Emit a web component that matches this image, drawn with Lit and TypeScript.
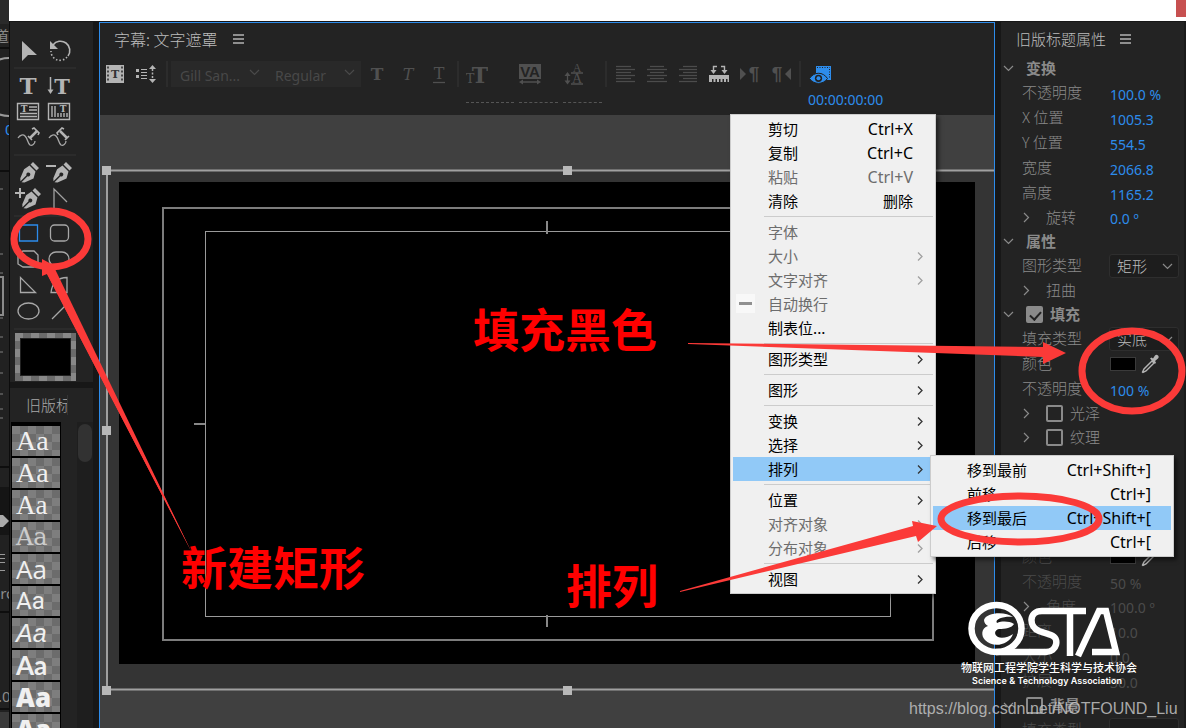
import { LitElement, html, svg, css, nothing } from "lit";
import { customElement } from "lit/decorators.js";
import { classMap } from "lit/directives/class-map.js";

type Item = { text: string; key?: string; off?: boolean; sub?: boolean; on?: boolean; dash?: boolean } | null;

const MENU: Item[] = [
  { text: "剪切", key: "Ctrl+X" },
  { text: "复制", key: "Ctrl+C" },
  { text: "粘贴", key: "Ctrl+V", off: true },
  { text: "清除", key: "删除" },
  null,
  { text: "字体", off: true },
  { text: "大小", off: true, sub: true },
  { text: "文字对齐", off: true, sub: true },
  { text: "自动换行", off: true, dash: true },
  { text: "制表位..." },
  null,
  { text: "图形类型", sub: true },
  null,
  { text: "图形", sub: true },
  null,
  { text: "变换", sub: true },
  { text: "选择", sub: true },
  { text: "排列", sub: true, on: true },
  null,
  { text: "位置", sub: true },
  { text: "对齐对象", off: true, sub: true },
  { text: "分布对象", off: true, sub: true },
  null,
  { text: "视图", sub: true },
];

const SUBMENU: Item[] = [
  { text: "移到最前", key: "Ctrl+Shift+]" },
  { text: "前移", key: "Ctrl+]" },
  { text: "移到最后", key: "Ctrl+Shift+[", on: true },
  { text: "后移", key: "Ctrl+[" },
];

const nib = svg`<path fill="#b4b4b4" d="M19 3l6 6-2.500 2.500-6-6zM15.500 6.500l6 6-2 7-9 4-3-.2 6-6a2 2 0 1 0-1-1l-6 6-.2-3 3.800-9z"/>`;
const curveT = svg`<path fill="none" stroke="#a8a8a8" stroke-width="1.300" d="M4 14c2-3 5-4 7-2 3 3 2 6 5 9 2 1 5-1 5-4"/>`;

/* Tool palette drawings, each on a 30 x 26 field; null is a divider. */
const TOOLS: ({ name: string; art: unknown } | null)[] = [
  { name: "选择", art: svg`<path fill="#b4b4b4" d="M8 4v20l6-6h9z"/>` },
  { name: "旋转", art: svg`<path fill="none" stroke="#b4b4b4" stroke-width="1.600" d="M8 8a9 9 0 0 1 15 11"/><path fill="none" stroke="#b4b4b4" stroke-width="1.600" stroke-dasharray="1.500 2" d="M22 20a9 9 0 0 1-16-6"/><path fill="#b4b4b4" d="M5 4v8h8z"/>` },
  null,
  { name: "文字", art: svg`<text x="14" y="22" class="slab" font-size="23" text-anchor="middle">T</text>` },
  { name: "垂直文字", art: svg`<text x="17" y="22" class="slab" font-size="21" text-anchor="middle">T</text><path fill="none" stroke="#b4b4b4" stroke-width="1.500" d="M5.500 5v14"/><path fill="#b4b4b4" d="M2.500 17.500h6l-3 4.500z"/>` },
  { name: "区域文字", art: svg`<path fill="none" stroke="#b4b4b4" stroke-width="1.400" d="M3.500 5.500h21v16h-21zM15 9h8M15 12h8M6 15.500h17M6 18.500h17"/><text x="10" y="14" class="slab" font-size="9" text-anchor="middle">T</text>` },
  { name: "垂直区域文字", art: svg`<path fill="none" stroke="#b4b4b4" stroke-width="1.400" d="M3.500 5.500h21v16h-21zM7 8v11M10 8v11M13 15v4M16 15v4M19 15v4M22 15v4"/><text x="18" y="14" class="slab" font-size="9" text-anchor="middle">T</text>` },
  { name: "路径文字", art: svg`${curveT}<path stroke="#b4b4b4" stroke-width="2.500" fill="none" d="M16 14l7-7"/><path stroke="#b4b4b4" stroke-width="1.600" fill="none" d="M18 5l2-1 5 5-1 2M14 12l4 4"/>` },
  { name: "垂直路径文字", art: svg`${curveT}<path stroke="#b4b4b4" stroke-width="2.500" fill="none" d="M15 7l7 7"/><path stroke="#b4b4b4" stroke-width="1.600" fill="none" d="M13 11l-1-2 5-5 2 1M20 16l4-4"/>` },
  null,
  { name: "钢笔", art: nib },
  { name: "删除锚点", art: svg`<g transform="translate(2 0)">${nib}</g><path fill="#b4b4b4" d="M1 6h10v2H1z"/>` },
  { name: "添加锚点", art: svg`<g transform="translate(2 0)">${nib}</g><path fill="#b4b4b4" d="M1 7h10v2H1zM5 3h2v10H5z"/>` },
  { name: "转换锚点", art: svg`<path fill="none" stroke="#a0a0a0" stroke-width="1.300" d="M9 23V4l13 13"/>` },
  null,
  { name: "矩形", art: svg`<path fill="none" stroke="#2d8ceb" stroke-width="1.300" d="M5.500 5h18v16h-18z"/>` },
  { name: "圆角矩形", art: svg`<rect fill="none" stroke="#a8a8a8" stroke-width="1.300" x="5.500" y="5" width="18" height="16" rx="4"/>` },
  { name: "切角矩形", art: svg`<path fill="none" stroke="#a8a8a8" stroke-width="1.300" d="M9 5h11l4 4v9l-4 3H9l-5-3V9z"/>` },
  { name: "圆矩形", art: svg`<rect fill="none" stroke="#a8a8a8" stroke-width="1.300" x="4" y="6" width="20" height="14" rx="7"/>` },
  { name: "楔形", art: svg`<path fill="none" stroke="#a8a8a8" stroke-width="1.300" d="M6.500 5.500v15h15z"/>` },
  { name: "弧形", art: svg`<path fill="none" stroke="#a8a8a8" stroke-width="1.300" d="M6 20.500C7 11 13 5.500 22 5.500v15z"/>` },
  { name: "椭圆", art: svg`<ellipse fill="none" stroke="#a8a8a8" stroke-width="1.300" cx="14.500" cy="13" rx="10.500" ry="8"/>` },
  { name: "直线", art: svg`<path stroke="#a8a8a8" stroke-width="1.300" d="M7 21L23 5"/>` },
  null,
];

const STYLES = ["s1", "s1", "s1 tight", "s2", "s3", "s4", "s5", "s6", "s7", "s7"];

const glyph = (w: number, h: number, art: unknown) =>
  html`<svg width=${w} height=${h} viewBox="0 0 ${w} ${h}" aria-hidden="true">${art}</svg>`;

const down = (c = "#8a8a8a") => glyph(11, 7, svg`<path fill="none" stroke=${c} stroke-width="1.200" d="M1 1l4.500 4.500L10 1"/>`);
const right = (c = "#8a8a8a") => glyph(7, 11, svg`<path fill="none" stroke=${c} stroke-width="1.200" d="M1 1l4.500 4.500L1 10"/>`);
const burger = glyph(11, 10, svg`<path stroke="#b4b4b4" stroke-width="1.300" d="M0 1h11M0 5h11M0 9h11"/>`);

@customElement("app-root")
export class AppRoot extends LitElement {
  static styles = css`
    :host {
      display: block;
      font-family: "Noto Sans", "Noto Sans CJK SC", sans-serif;
      font-size: 15px;
      line-height: 20px;
    }
    * { box-sizing: border-box; }
    svg { display: block; flex: none; }
    button, input, select { font: inherit; color: inherit; background: none; border: 0; padding: 0; margin: 0; }
    .app { position: relative; display: flex; height: 100vh; overflow: hidden; background: #171717; color: #8a8a8a; }
    .cjk { font-family: "Noto Sans CJK SC", sans-serif; font-weight: 300; }
    .behind { width: 9px; flex: none; background: #212121; overflow: hidden; }
    .window { flex: 1; min-width: 0; display: flex; flex-direction: column; border-left: 1px solid #0c0c0c; }
    .titlebar { height: 21px; flex: none; background: #fff; display: flex; justify-content: flex-end; margin-left: -1px; }
    .close { width: 10px; height: 17px; background: #c75050; }
    .main { flex: 1; min-height: 0; display: flex; gap: 6px; padding-top: 1px; }

    .left { width: 83px; flex: none; display: flex; flex-direction: column; gap: 6px; }
    .panel { background: #232323; }
    .tools { display: grid; grid-template-columns: 31px 31px; grid-auto-rows: auto; padding: 15px 4px 1px; align-content: start; }
    .tool { height: 26px; width: 31px; }
    .rule { grid-column: 1 / 3; height: 9px; display: flex; align-items: center; }
    .rule::before { content: ""; flex: 1; height: 2px; background: #2b2b2b; }
    .fill { grid-column: 1 / 3; width: 61px; height: 48px; margin-left: 1px; padding: 5px;
      background: repeating-conic-gradient(#6b6b6b 0 25%, #888 0 50%) 0 0 / 16px 16px; }
    .fill span { display: block; height: 100%; background: #000; border: 1px solid #222; }
    .slab { font-family: "DejaVu Serif", serif; font-weight: 700; fill: #b4b4b4; }
    .slab.ink { fill: #333; }
    .styles { flex: 1; min-height: 0; display: flex; flex-direction: column; overflow: hidden; }
    .tab { height: 34px; flex: none; padding-left: 16px; display: flex; align-items: center; color: #a8a8a8; }
    .tab span { width: 42px; overflow: hidden; white-space: nowrap; border-right: 1px solid #333; }
    .list { flex: 1; min-height: 0; display: flex; justify-content: space-between; }
    .swatches { width: 50px; margin-left: 1px; padding: 4px 1px 0; background: #000; display: flex; flex-direction: column; gap: 2px; overflow: hidden; }
    .aa { flex: none; height: 30px; text-align: left; padding-left: 4px; color: #f0f0f0; line-height: 30px; font-size: 26px;
      background: repeating-conic-gradient(#6c6c6c 0 25%, #7e7e7e 0 50%) 0 0 / 16px 16px; }
    .s1 { font-family: "Liberation Serif", serif; font-size: 28px; }
    .tight { font-size: 27px; }
    .s2 { font-family: "DejaVu Serif", serif; font-size: 24px; color: #ccc; }
    .s3 { font-family: "Open Sans", sans-serif; }
    .s4 { font-family: Roboto, sans-serif; font-size: 24px; }
    .s5 { font-family: "Liberation Sans", sans-serif; font-style: italic; font-size: 25px; }
    .s6 { font-family: Lato, sans-serif; font-weight: 700; }
    .s7 { font-family: "Open Sans", sans-serif; font-weight: 800; }
    .scroll { width: 16px; background: #1e1e1e; padding: 2px 1px; }
    .scroll span { display: block; height: 38px; border-radius: 7px; background: #323232; }

    .title { flex: 1; min-width: 0; display: flex; flex-direction: column; background: #404040; border: 1px solid #2d8ceb; border-bottom: 0; overflow: hidden; }
    .head { height: 34px; flex: none; display: flex; align-items: center; gap: 15px; padding: 0 0 2px 14px; background: #232323; color: #bcbcbc; font-size: 16px; white-space: nowrap; }
    .bar { height: 58px; flex: none; display: flex; align-items: flex-start; padding: 4px 0 0 6px; background: #232323; color: #484848; font-size: 14px; }
    .bar button, .pick { height: 26px; display: flex; align-items: center; justify-content: center; flex: none; }
    .bar .b31 { width: 31px; }
    .bar .gap { margin-right: 11px; }
    .sep { width: 2px; height: 26px; background: #2c2c2c; margin: 0 3px; flex: none; }
    .sep.first { margin-left: 10px; }
    .pick { position: relative; width: 95px; background: #292929; }
    .pick select { appearance: none; width: 100%; height: 26px; padding: 4px 0 0 9px; opacity: 1; }
    .pick svg { position: absolute; right: 6px; top: 8px; pointer-events: none; }
    .metrics { display: flex; gap: 5px; margin: 0 0 0 4px; }
    .col { display: flex; flex-direction: column; width: 39px; }
    .col.wide { width: 48px; }
    .dash { margin-top: 15px; border-top: 1px dashed #555; }
    .bar .col button { justify-content: flex-start; }
    .clock { margin-left: 4px; display: flex; flex-direction: column; align-items: flex-start; color: #2d8ceb; line-height: 26px; white-space: nowrap; }
    .clock button { padding-left: 1px; }
    .old { font-family: "DejaVu Serif", serif; fill: #505050; }
    .thin { font-family: "Liberation Serif", serif; fill: #505050; }
    .pil { font-family: "Liberation Sans", sans-serif; font-weight: 700; fill: #505050; }
    .pil.ink { fill: #232323; }
    .stage { flex: 1; min-height: 0; overflow: hidden; }

    .props { width: 185px; flex: none; padding-right: 2px; border-right: 2px solid #1b1b1b; overflow: hidden; white-space: nowrap; }
    .phead { height: 34px; display: flex; align-items: center; gap: 14px; padding-left: 15px; color: #bcbcbc; }
    .row { height: 25px; display: flex; align-items: center; padding-left: 21px; }
    .row > label { width: 87px; flex: none; padding-bottom: 1px; }
    .row > label + input { margin-left: 1px; }
    .row input[type="text"] { width: 68px; height: 25px; padding-top: 3px; color: #2d8ceb; font-size: 14px; }
    .group, .subrow { height: 24px; display: flex; align-items: center; }
    .group { padding-left: 2px; gap: 12px; }
    .group .name { font-weight: 700; }
    .group .mark { width: 11px; }
    .subrow { padding-left: 22px; }
    .subrow .mark { width: 23px; flex: none; }
    .subrow .lab { width: 64px; }
    .subrow input[type="text"] { width: 68px; padding-top: 3px; color: #2d8ceb; font-size: 14px; }
    .chk { display: flex; align-items: center; gap: 7px; }
    input[type="checkbox"] { appearance: none; width: 17px; height: 17px; border: 2px solid #8a8a8a; border-radius: 2px; display: block; flex: none; }
    input[type="checkbox"]:checked { background: #8a8a8a; }
    input[type="checkbox"]:checked::after { content: ""; display: block; width: 5px; height: 9px; margin: 1px 0 0 4px; border: solid #232323; border-width: 0 2px 2px 0; transform: rotate(42deg); }
    .drop { position: relative; width: 70px; height: 24px; background: #1d1d1d; border: 1px solid #2e2e2e; border-radius: 3px; color: #bcbcbc; }
    .drop select { appearance: none; width: 100%; height: 22px; padding-left: 7px; font-size: 15px; }
    .drop svg { position: absolute; right: 5px; top: 8px; pointer-events: none; }
    .chip { width: 26px; height: 14px; margin: 0 5px 0 1px; background: #000; border: 1px solid #3a3a3a; }
    .covered { height: 95px; }
    .dim, .dim input[type="text"] { color: #4b4b4b; }

    .menu { position: absolute; background: #f0f0f0; border: 1px solid #ccc; padding: 2px; color: #000; box-shadow: 3px 3px 4px rgba(0, 0, 0, 0.5); font-weight: 400; }
    .menu.main-menu { left: 730px; top: 114px; width: 206px; }
    .menu.sub-menu { left: 930px; top: 455px; width: 244px; }
    .item { display: flex; align-items: center; width: 100%; height: 24px; padding-right: 20px; white-space: nowrap; text-align: left; }
    .item.on { background: #91c9f7; }
    .item.off { color: #6d6d6d; }
    .icon { width: 35px; flex: none; height: 20px; display: flex; padding-left: 3px; }
    .sub-menu .icon { width: 34px; }
    .icon i { width: 19px; height: 19px; background: #f8f8f8; display: flex; align-items: center; justify-content: center; }
    .icon i::before { content: ""; width: 13px; height: 3px; background: #909090; }
    .word { flex: 1; font-family: "Noto Sans CJK SC", sans-serif; }
    .key { font-size: 16px; }
    .key.han { font-size: 15px; }
    .arrow { margin-right: -10px; }
    .line { height: 7px; padding: 3px 0 3px 31px; }
    .line::before { content: ""; display: block; height: 1px; background: #ccc; }

    .marks { position: absolute; left: 0; top: 0; pointer-events: none; }
    .note { font-family: "Noto Sans CJK SC", sans-serif; font-weight: 700; font-size: 46px; fill: #f00; }
    .brand { font-family: "Noto Sans CJK SC", sans-serif; fill: #fff; font-weight: 500; }
    .mark-en { font-family: Inter, sans-serif; font-weight: 600; fill: #fff; }
    .credit { font-family: "Liberation Sans", sans-serif; font-size: 16px; fill: #c4c4c4; fill-opacity: 0.85; }
    .frag { font-family: "Noto Sans", "Noto Sans CJK SC", sans-serif; font-size: 15px; fill: #8a8a8a; }
    .frag.blue { fill: #2d8ceb; }
  `;

  private menuItems(items: Item[]) {
    return items.map((it) =>
      it === null
        ? html`<div class="line" role="separator"></div>`
        : html`<button role="menuitem" class=${classMap({ item: true, on: !!it.on, off: !!it.off })}>
            <span class="icon">${it.dash ? html`<i></i>` : nothing}</span>
            <span class="word">${it.text}</span>
            ${it.key ? html`<span class=${classMap({ key: true, han: it.key === "删除" })}>${it.key}</span>` : nothing}
            ${it.sub
              ? html`<span class="arrow">${glyph(6, 9, svg`<path fill="none" stroke=${it.off ? "#a0a0a0" : "#333"} stroke-width="1.300" d="M1 .5l4 4-4 4"/>`)}</span>`
              : nothing}
          </button>`
    );
  }

  private field(id: string, label: string, value: string, dim = false) {
    return html`<div class=${classMap({ row: true, dim })}>
      <label class="cjk" for=${id}>${label}</label><input type="text" id=${id} .value=${value} />
    </div>`;
  }

  private group(name: string) {
    return html`<div class="group"><span class="mark">${down()}</span><span class="name">${name}</span></div>`;
  }

  private sub(id: string, name: string, value?: string, dim = false) {
    return html`<div class=${classMap({ subrow: true, dim })}>
      <span class="mark">${right()}</span>
      ${value
        ? html`<label class="cjk lab" for=${id}>${name}</label><input type="text" id=${id} .value=${value} />`
        : html`<span class="cjk lab">${name}</span>`}
    </div>`;
  }

  private drop(id: string, label: string, value: string) {
    return html`<div class="row">
      <label class="cjk" for=${id}>${label}</label>
      <span class="drop"><select class="cjk" id=${id}><option>${value}</option></select>${down()}</span>
    </div>`;
  }

  private color(id: string, dim = false) {
    return html`<div class=${classMap({ row: true, dim })}>
      <label class="cjk" for=${id}>颜色</label><button class="chip" id=${id}></button>
      <button aria-label="吸管">
        ${glyph(19, 20, svg`<path fill="none" stroke="#b4b4b4" stroke-width="1.400" d="M11 7l2 2-8 8-3 1.500-.5-.5L3 15z"/><path fill="#b4b4b4" d="M9 4.500l1.500-1 1.500 1 2-3c2-2 5 1 3 3l-3 2.500 1 1.500-1 1.500z"/>`)}
      </button>
    </div>`;
  }

  private lines(a: number[][]) {
    return glyph(20, 18, a.map(([x1, x2], i) => svg`<path stroke="#4c4c4c" stroke-width="1.300" d="M${x1} ${1.5 + i * 3}H${x2}"/>`));
  }

  private toolbar() {
    return html`<div class="bar">
      <button class="gap" aria-label="基于当前字幕新建">
        ${glyph(18, 18, svg`<path fill="#b4b4b4" d="M0 0h18v18H0z"/><path stroke="#232323" stroke-width="1.500" stroke-dasharray="2 2" d="M2 1.500v16M16 1.500v16"/><text x="9" y="13" font-size="11" text-anchor="middle" class="slab ink">T</text>`)}
      </button>
      <button aria-label="滚动选项">
        ${glyph(21, 18, svg`<path fill="#b4b4b4" d="M1 4h3v3H1zM1 10h3v3H1zM14 4l3.500-4L21 4zM14 14l3.500 4 3.500-4z"/><path stroke="#b4b4b4" stroke-width="1.200" d="M6 4.500h6M6 7.500h6M6 10.500h6M6 13.500h6"/><path stroke="#b4b4b4" stroke-width="1.500" stroke-dasharray="2 1.500" d="M17.500 4v10"/>`)}
      </button>
      <span class="sep first"></span>
      <span class="pick"><select aria-label="字体" disabled><option>Gill San...</option></select>${down("#4a4a4a")}</span>
      <span class="pick"><select aria-label="字体样式" disabled><option>Regular</option></select>${down("#4a4a4a")}</span>
      <button class="b31" aria-label="粗体">${glyph(18, 18, svg`<text x="9" y="15" font-size="17" font-weight="700" text-anchor="middle" class="old">T</text>`)}</button>
      <button class="b31" aria-label="斜体">${glyph(18, 18, svg`<text x="9" y="15" font-size="16" font-style="italic" text-anchor="middle" class="old">T</text>`)}</button>
      <button class="b31" aria-label="下划线">${glyph(18, 20, svg`<text x="9" y="15" font-size="16" text-anchor="middle" class="old">T</text><path stroke="#505050" stroke-width="1.300" d="M3 18.500h12"/>`)}</button>
      <span class="sep"></span>
      <div class="metrics">
        <div class="col wide">
          <button aria-label="大小">${glyph(22, 20, svg`<text x="4" y="19" font-size="13" text-anchor="middle" class="old">T</text><text x="14" y="19" font-size="22" font-weight="700" text-anchor="middle" class="old">T</text>`)}</button>
          <span class="dash"></span>
        </div>
        <div class="col">
          <button aria-label="字偶间距">${glyph(22, 22, svg`<path fill="#505050" d="M0 1h22v15H0z"/><text x="11" y="14" font-size="15" text-anchor="middle" class="pil ink">VA</text><path stroke="#505050" stroke-width="1.500" d="M3 19h16"/><path fill="#505050" d="M4 16.500v5L0 19zM18 16.500v5l4-2.500z"/>`)}</button>
          <span class="dash"></span>
        </div>
        <div class="col">
          <button aria-label="行距">${glyph(22, 22, svg`<text x="14" y="9" font-size="12" text-anchor="middle" class="thin">A</text><text x="14" y="20" font-size="14" text-anchor="middle" class="thin">A</text><path stroke="#505050" stroke-width="1.300" d="M8 10h12M8 21h12M4.500 11v8"/><path fill="#505050" d="M1.500 13h6l-3-4zM1.500 17.500h6l-3 4z"/>`)}</button>
          <span class="dash"></span>
        </div>
      </div>
      <span class="sep"></span>
      <button class="b31" aria-label="左对齐">${this.lines([[0, 15], [0, 19], [0, 15], [0, 19], [0, 15], [0, 19]])}</button>
      <button class="b31" aria-label="居中">${this.lines([[3, 17], [0, 20], [3, 17], [0, 20], [3, 17], [0, 20]])}</button>
      <button class="b31" aria-label="右对齐">${this.lines([[5, 19], [1, 19], [5, 19], [1, 19], [5, 19], [1, 19]])}</button>
      <button class="b31" aria-label="制表位">
        ${glyph(20, 18, svg`<path fill="none" stroke="#b4b4b4" stroke-width="1.400" d="M8 1.500H4.500V6M12 1.500h3.500V6"/><path fill="#b4b4b4" d="M1.500 5h6l-3 4zM12.500 5h6l-3 4zM0 10h20v7h-1.500v-3H17v3h-2v-3h-1.500v3h-2v-3H10v3H8v-3H6.500v3h-2v-3H3v3H0z"/>`)}
      </button>
      <button class="b31" aria-label="从左至右">${glyph(22, 20, svg`<path fill="#505050" d="M1 4v12l6-6z"/><text x="15" y="16" font-size="19" text-anchor="middle" class="pil">¶</text>`)}</button>
      <button class="b31" aria-label="从右至左">${glyph(22, 20, svg`<path fill="#505050" d="M21 4v12l-6-6z"/><text x="7" y="16" font-size="19" text-anchor="middle" class="pil">¶</text>`)}</button>
      <span class="sep"></span>
      <div class="clock">
        <button aria-label="显示背景视频">
          ${glyph(22, 19, svg`<path fill="#2d8ceb" d="M7 1h15v14h-5L12 8H7z"/><path stroke="#232323" stroke-dasharray="1 1.500" d="M8 2.500h13M20.500 4v10"/><path fill="#2d8ceb" stroke="#232323" d="M.5 13.500C5 6.500 14 6.500 18.500 13.500 14 20 5 20 .5 13.500z"/><circle cx="9.500" cy="13.300" r="3.600" fill="#232323"/><circle cx="9.500" cy="13.300" r="2" fill="#2d8ceb"/>`)}
        </button>
        <span>00:00:00:00</span>
      </div>
    </div>`;
  }

  private canvas() {
    const handles = [[6, 55], [467, 55], [6, 315], [6, 575], [467, 575]];
    return glyph(894, 613, svg`
      <path fill="#343434" d="M7 56h900v518H7z"/>
      <path fill="#000" d="M19 67h856v482H19z"/>
      <rect x="7" y="55.500" width="920" height="519" fill="none" stroke="#a0a0a0" stroke-width="2"/>
      <rect x="63" y="93" width="770" height="432" fill="none" stroke="#7c7c7c" stroke-width="2"/>
      <rect x="105.500" y="116.500" width="685" height="385" fill="none" stroke="#9a9a9a"/>
      <path stroke="#888" stroke-width="2" d="M447 106v13M447 500v12M94 309h11"/>
      ${handles.map(([x, y]) => svg`<rect x=${x - 4} y=${y - 4} width="9" height="9" fill="#b8b8b8"/>`)}
    `);
  }

  private overlay() {
    return html`<svg class="marks" width="1186" height="728" viewBox="0 0 1186 728">
      <text class="note" x="473" y="347">填充黑色</text>
      <text class="note" x="181" y="585">新建矩形</text>
      <text class="note" x="566" y="603">排列</text>
      <g fill="none" stroke="#fb3a38" stroke-width="7">
        <ellipse cx="51" cy="239" rx="37" ry="28"/>
        <ellipse cx="1132" cy="371" rx="50" ry="40"/>
        <ellipse cx="1020" cy="519" rx="79" ry="23"/>
      </g>
      <g fill="#fb3a38">
        <path d="M191 551L47 274l-5 2v-17l17 9-5 3z"/>
        <path d="M191 551L46 272l9-3z"/>
        <path d="M688 343l355 4v-5l23 11-23 11v-7l-355-13z"/>
        <path d="M680 591l233-65-1-5 25 5-19 16-2-6-236 56z"/>
      </g>
      <g fill="none" stroke="#fff" stroke-width="6.500">
        <ellipse cx="996.500" cy="628.500" rx="25" ry="23.500"/>
        <path d="M1086 611h-44c-14 0-13 16-3 20l12 4c9 3 6 17-5 17h-50"/>
        <path d="M1070 611v45"/>
        <path d="M1078 656l21-45h7l10 41h-24"/>
      </g>
      <path fill="#fff" d="M1013 617c-7-6-27-5-29 3 0 3 2 5 4 6-7 2-7 10-3 14 7 8 24 6 28-6-4 3-11 5-15 3s-4-7 1-8c6 0 13-1 15-5-5-3-12-3-17-1-3-4 8-7 16-6z"/>
      <text class="brand" x="1049" y="672" font-size="11" text-anchor="middle">物联网工程学院学生科学与技术协会</text>
      <text class="mark-en" x="1047" y="684" font-size="9" text-anchor="middle">Science &amp; Technology Association</text>
      <text class="credit" x="909" y="714">https://blog.csdn.net/NOTFOUND_Liu</text>
    </svg>`;
  }

  render() {
    return html`<div class="app">
      <div class="behind">
        ${glyph(9, 728, svg`
          <path fill="#2a2a2a" d="M0 0h9v24H0z"/>
          <text class="frag" x="-6" y="42">道</text>
          <circle cx="9" cy="87" r="29" fill="none" stroke="#999" stroke-width="2"/>
          <text class="frag blue" x="5" y="135">0</text>
          <path stroke="#0e0e0e" stroke-width="2" d="M0 48h9M0 171h9M0 467h9M0 612h9M0 709h9"/>
          <path stroke="#808080" d="M0 189h3M0 254h3M0 273h3M0 318h3M0 337h3M0 352h3M0 373h3M0 394h3M0 409h3M0 418h3"/>
          <path fill="none" stroke="#8a8a8a" stroke-width="2" d="M0 277h3v38H0"/>
          <path fill="#151515" d="M0 487h9v48H0z"/>
          <path fill="#aaa" d="M0 515h3l6 6-6 6H0z"/>
          <path stroke="#999" d="M0 554.500h5M0 558.500h5M0 562.500h5M0 570.500h5"/>
          <text class="frag" x="-9" y="599">pro</text>
          <text class="frag" x="-2" y="702">.0</text>
          <path fill="#3a3a3a" d="M0 712h9v16H0z"/>`)}
      </div>
      <div class="window">
        <div class="titlebar"><button class="close" aria-label="关闭"></button></div>
        <div class="main">
          <div class="left">
            <div class="panel tools">
              ${TOOLS.map((t) => (t ? html`<button class="tool" aria-label=${t.name}>${glyph(30, 26, t.art)}</button>` : html`<div class="rule"></div>`))}
              <div class="fill"><span></span></div>
            </div>
            <div class="panel styles">
              <div class="tab cjk"><span>旧版标</span></div>
              <div class="list">
                <div class="swatches">${STYLES.map((s) => html`<button class="aa ${s}">Aa</button>`)}</div>
                <div class="scroll"><span></span></div>
              </div>
            </div>
          </div>
          <div class="title">
            <div class="head cjk"><span>字幕: 文字遮罩</span>${burger}</div>
            ${this.toolbar()}
            <div class="stage">${this.canvas()}</div>
          </div>
          <div class="panel props">
            <div class="phead cjk"><span>旧版标题属性</span>${burger}</div>
            ${this.group("变换")}
            ${this.field("opacity", "不透明度", "100.0 %")}
            ${this.field("px", "X 位置", "1005.3")}
            ${this.field("py", "Y 位置", "554.5")}
            ${this.field("w", "宽度", "2066.8")}
            ${this.field("h", "高度", "1165.2")}
            ${this.sub("rot", "旋转", "0.0 º")}
            ${this.group("属性")}
            ${this.drop("shape", "图形类型", "矩形")}
            ${this.sub("warp", "扭曲")}
            <div class="group"><span class="mark">${down()}</span><label class="chk"><input type="checkbox" checked /><span class="name">填充</span></label></div>
            ${this.drop("filltype", "填充类型", "实底")}
            ${this.color("fillcolor")}
            ${this.field("fillop", "不透明度", "100 %")}
            <div class="subrow"><span class="mark">${right()}</span><label class="chk cjk"><input type="checkbox" />光泽</label></div>
            <div class="subrow"><span class="mark">${right()}</span><label class="chk cjk"><input type="checkbox" />纹理</label></div>
            <div class="covered"></div>
            ${this.color("shadowcolor", true)}
            ${this.field("shop", "不透明度", "50 %", true)}
            ${this.sub("angle", "角度", "100.0 º", true)}
            ${this.field("dist", "距离", "10.0", true)}
            ${this.field("size", "大小", "0.0", true)}
            ${this.field("spread", "扩展", "30.0", true)}
            <div class="group"><span class="mark">${down()}</span><label class="chk"><input type="checkbox" /><span class="name">背景</span></label></div>
            <div class="row dim"><label class="cjk" for="bgtype">填充类型</label><span class="drop"><select id="bgtype"></select></span></div>
          </div>
        </div>
      </div>
      <div class="menu main-menu" role="menu">${this.menuItems(MENU)}</div>
      <div class="menu sub-menu" role="menu">${this.menuItems(SUBMENU)}</div>
      ${this.overlay()}
    </div>`;
  }
}
